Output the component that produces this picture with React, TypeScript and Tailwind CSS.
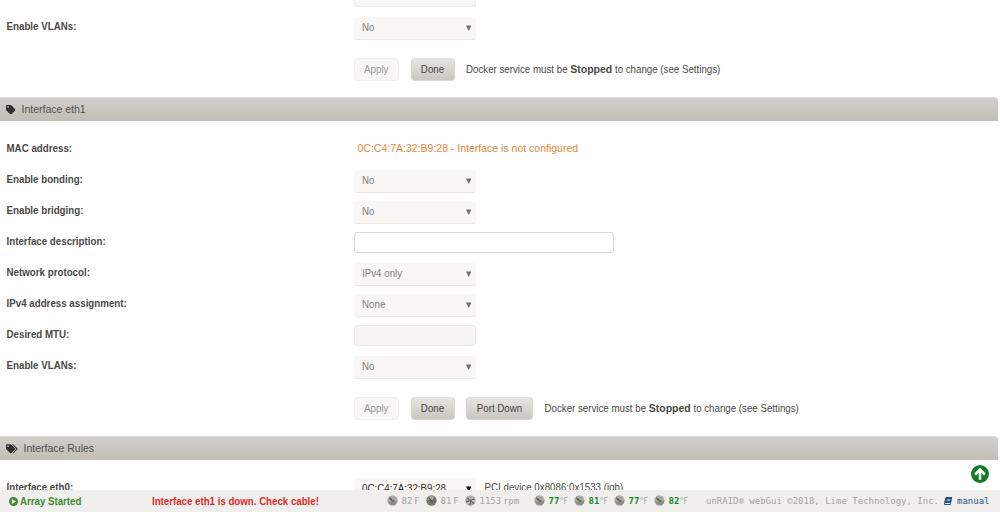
import { ReactNode } from 'react';
import { FaBook, FaTag, FaTags } from 'react-icons/fa';

// Slightly condensed text used all over the page
function Text({ children, className = '' }: { children: ReactNode; className?: string }) {
  return (
    <span className={`inline-block shrink-0 scale-y-[1.12] whitespace-pre ${className}`}>
      {children}
    </span>
  );
}

type RowProps = {
  label: string;
  children: ReactNode;
};

function Row({ label, children }: RowProps) {
  return (
    <div className="flex h-[31px] shrink-0 items-center">
      <div className="w-[353.5px] shrink-0 pt-[1px] pl-[6.5px] font-bold">
        <Text>{label}</Text>
      </div>
      {children}
    </div>
  );
}

function Select({ value, enabled = false }: { value: string; enabled?: boolean }) {
  return (
    <div
      className={`mt-[3px] flex h-[23px] w-[122px] shrink-0 items-center justify-between rounded-[3px] border-b bg-[#f8f7f6] pr-[4.5px] pl-[8.5px] ${
        enabled ? 'border-[#e4e4e2] text-[#303030]' : 'border-[#e9e8e7] text-[#808080]'
      }`}
    >
      <Text>{value}</Text>
      <svg
        viewBox="0 0 5 6"
        className={`h-[6px] w-[5.5px] ${enabled ? 'fill-black' : 'fill-[#707070]'}`}
        preserveAspectRatio="none"
      >
        <path d="M0 0.5h5L2.5 6z" />
      </svg>
    </div>
  );
}

type ButtonProps = {
  children: ReactNode;
  width: string;
  disabled?: boolean;
};

function Button({ children, width, disabled = false }: ButtonProps) {
  return (
    <button
      disabled={disabled}
      className={`flex h-[23px] items-center justify-center rounded-[4px] border ${width} ${
        disabled
          ? 'border-[#f1f0ef] bg-[#f8f7f6] text-[#979797]'
          : 'border-[#d8d6d2] border-t-[#e4e3e1] bg-linear-to-b from-[#e6e5e3] to-[#c9c6c0] text-[#484844]'
      }`}
    >
      <Text>{children}</Text>
    </button>
  );
}

function Actions({ portDown = false }: { portDown?: boolean }) {
  return (
    <div className="flex h-[23px] shrink-0 items-center gap-[11.5px] pl-[353.5px]">
      <Button width="w-[45.5px]" disabled>
        Apply
      </Button>
      <Button width="w-[44px]">Done</Button>
      {portDown && <Button width="w-[67px]">Port Down</Button>}
      <Text className="text-[9.72px]">
        Docker service must be <b className="text-[10.5px]">Stopped</b> to change (see Settings)
      </Text>
    </div>
  );
}

function SectionTitle({ icon, children }: { icon: ReactNode; children: ReactNode }) {
  return (
    <div className="mr-[2px] flex h-[24px] shrink-0 items-center rounded-tr-[4px] border-t border-[#dedcd9] bg-linear-to-b from-[#d1cfca] to-[#c1beb5] pl-[6px] text-[10.5px] text-[#505050]">
      {icon}
      <span>{children}</span>
    </div>
  );
}

function Gauge({ variant = 'dial' }: { variant?: 'dial' | 'cpu' | 'fan' }) {
  return (
    <svg viewBox="0 0 12 12" className="mb-[2px] size-[11px] shrink-0">
      <circle cx="6" cy="6" r="5.6" fill={variant === 'cpu' ? '#73736f' : '#a9a8a2'} />
      {variant === 'dial' && (
        <>
          <path d="M1.5 8A5 5 0 0 0 11 7L7 6z" fill="#8b8a84" />
          <path d="M2.6 3 6.6 6.8" stroke="#4c4c48" strokeWidth="1.3" />
          <circle cx="7" cy="6.4" r="1.3" fill="#777670" />
        </>
      )}
      {variant === 'cpu' && (
        <>
          <path d="M1.5 5A4.5 4.5 0 0 1 9 2.2L6.5 6z" fill="#aaa9a5" />
          <path d="M2.6 2.8 7 7" stroke="#454541" strokeWidth="1.2" />
        </>
      )}
      {variant === 'fan' && (
        <>
          <path
            d="M6 6 2 2.5M6 6l4.5-2M6 6l4 3.5M6 6l-.5 5M6 6 1 7.5"
            stroke="#62625d"
            strokeWidth="1.2"
          />
          <path d="M6 6 4.2 1.8M6 6l3-3.8M6 6l4.8.6M6 6l-3 3.6" stroke="#dddcd8" strokeWidth="0.9" />
          <circle cx="6" cy="6" r="1.3" fill="#62625e" />
        </>
      )}
    </svg>
  );
}

const disks = [77, 81, 77, 82];

function Footer() {
  return (
    <footer className="absolute inset-x-0 bottom-0 flex h-[22px] items-center bg-[#f0efee] font-['DejaVu_Sans_Mono','Liberation_Mono',monospace] text-[9px] text-[#a5a5a2]">
      <div className="flex w-[152px] shrink-0 items-center gap-[2px] pt-[1px] pl-[9px] font-['Liberation_Sans',Arial,sans-serif] text-[9.7px] font-bold text-[#408a30]">
        <svg viewBox="0 0 18 18" className="size-[9px]">
          <circle cx="9" cy="9" r="9" fill="currentColor" />
          <path d="M5.8 4v10l8.4-5z" fill="#f8faf6" />
        </svg>
        <Text>Array Started</Text>
      </div>
      <div className="w-[235px] shrink-0 pt-[1px] font-['Liberation_Sans',Arial,sans-serif] text-[9.7px] font-bold text-[#e02a2a]">
        <Text>Interface eth1 is down. Check cable!</Text>
      </div>
      <div className="flex w-[147px] shrink-0 items-center">
        <div className="flex w-[39px] items-center">
          <Gauge />
          <span className="ml-[3.5px]">82</span>
          <span className="ml-[2px]">F</span>
        </div>
        <div className="flex w-[39px] items-center">
          <Gauge variant="cpu" />
          <span className="ml-[3.5px]">81</span>
          <span className="ml-[2px]">F</span>
        </div>
        <Gauge variant="fan" />
        <span className="ml-[3.5px]">1153</span>
        <span className="ml-[2px]">rpm</span>
      </div>
      <div className="flex w-[172px] shrink-0">
        {disks.map((temp, i) => (
          <div key={i} className="flex w-[40px] shrink-0 items-center">
            <Gauge />
            <b className="ml-[3.5px] text-[#158a24]">{temp}</b>
            <span className="pt-[1px] text-[8px] tracking-[-1px]">°F</span>
          </div>
        ))}
      </div>
      <span className="whitespace-nowrap">unRAID® webGui ©2018, Lime Technology, Inc.</span>
      <a className="ml-[5px] flex items-center gap-[5px] text-[#285580]">
        <FaBook className="size-[8px] -skew-x-12" />
        manual
      </a>
    </footer>
  );
}

export default function App() {
  return (
    <div className="relative flex h-[512px] w-[1000px] flex-col overflow-hidden bg-[#fefefe] font-['Liberation_Sans',Arial,sans-serif] text-[9.75px] leading-none text-[#4a4a45]">
      <div className="flex h-[11px] shrink-0 items-start pl-[353.5px]">
        <div className="h-[7px] w-[122px] rounded-b-[3px] border border-t-0 border-[#efeded] bg-[#f7f5f5]" />
      </div>
      <Row label="Enable VLANs:">
        <Select value="No" />
      </Row>
      <div className="mt-[16px] mb-[16px]">
        <Actions />
      </div>

      <SectionTitle icon={<FaTag className="mr-[6px] size-[9.5px] text-[#303030]" />}>
        Interface eth1
      </SectionTitle>
      <div className="flex flex-col pt-[12px]">
        <Row label="MAC address:">
          <Text className="pl-[4px] text-[10.5px] text-[#e08a3c]">
            0C:C4:7A:32:B9:28 - Interface is not configured
          </Text>
        </Row>
        <Row label="Enable bonding:">
          <Select value="No" />
        </Row>
        <Row label="Enable bridging:">
          <Select value="No" />
        </Row>
        <Row label="Interface description:">
          <input className="mt-[1px] h-[21px] w-[260px] rounded-[3px] border border-[#dadada] bg-white px-2" />
        </Row>
        <Row label="Network protocol:">
          <Select value="IPv4 only" />
        </Row>
        <Row label="IPv4 address assignment:">
          <Select value="None" />
        </Row>
        <Row label="Desired MTU:">
          <input
            disabled
            className="mt-[1px] h-[21px] w-[122px] rounded-[3px] border border-[#ebeae9] bg-[#f6f4f4] px-2"
          />
        </Row>
        <Row label="Enable VLANs:">
          <Select value="No" />
        </Row>
      </div>
      <div className="mt-[16px] mb-[16px]">
        <Actions portDown />
      </div>

      <SectionTitle icon={<FaTags className="mr-[6px] size-[11.5px] text-[#303030]" />}>
        Interface Rules
      </SectionTitle>
      <div className="pt-[12px]">
        <Row label="Interface eth0:">
          <Select value="0C:C4:7A:32:B9:28" enabled />
          <Text className="pt-[1px] pl-[9px]">PCI device 0x8086:0x1533 (igb)</Text>
        </Row>
      </div>

      {/* Back to top */}
      <svg viewBox="0 0 24 24" className="absolute right-[11px] bottom-[29px] size-[18px]">
        <circle cx="12" cy="12" r="12" fill="#157a28" />
        <path d="M5.5 12.7 12 6.2l6.5 6.5M12 7v12.5" fill="none" stroke="#fff" strokeWidth="3.4" />
      </svg>
      <Footer />
    </div>
  );
}
